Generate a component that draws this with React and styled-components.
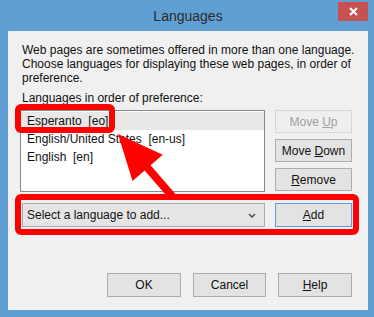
import React from "react";
import styled, { createGlobalStyle } from "styled-components";

const GlobalStyle = createGlobalStyle`
  html, body {
    margin: 0;
    padding: 0;
    background: #ffffff;
  }
  body {
    font-family: "Liberation Sans", Arial, sans-serif;
  }
`

const Window = styled.div`
  position: relative;
  box-sizing: border-box;
  width: 374px;
  height: 317px;
  background: #609fd4;
  display: flex;
  flex-direction: column;
  padding: 0 6px 7px 8px;
`

const TitleBar = styled.div`
  height: 31px;
  display: grid;
  grid-template-columns: 1fr auto 1fr;
  align-items: start;
`

const Title = styled.div`
  grid-column: 2;
  margin-top: 8px;
  font-size: 14px;
  line-height: 16px;
  color: #2b2b2b;
`

const CloseButton = styled.div`
  grid-column: 3;
  justify-self: end;
  margin-top: 2px;
  width: 30px;
  height: 19px;
  background: #c75050;
  display: flex;
  align-items: center;
  justify-content: center;
`

const Client = styled.div`
  flex: 1;
  box-sizing: border-box;
  background: #f0f0f0;
  padding: 12px 16px 0 12px;
  display: flex;
  flex-direction: column;
  font-size: 12px;
  color: #111;
`

const Intro = styled.p`
  margin: 0 0 0 2px;
  line-height: 14px;
  white-space: nowrap;
`

const Label = styled.div`
  margin: 6px 0 0 2px;
  line-height: 14px;
`

const ListRow = styled.div`
  margin-top: 5px;
  display: flex;
  gap: 10px;
  align-items: flex-start;
`

const ListBox = styled.div`
  box-sizing: border-box;
  width: 245px;
  height: 82px;
  background: #fff;
  border: 1px solid #828790;
  padding-top: 1px;
`

const ListItem = styled.div`
  height: 18px;
  line-height: 18px;
  padding-left: 6px;
  white-space: pre;
  background: ${p => (p.$selected ? "#e8e8e8" : "transparent")};
`

const ButtonColumn = styled.div`
  display: flex;
  flex-direction: column;
  gap: 6px;
`

const Button = styled.div`
  box-sizing: border-box;
  width: ${p => p.$w || 77}px;
  height: ${p => p.$h || 24}px;
  display: flex;
  align-items: center;
  justify-content: center;
  font-size: 12px;
  white-space: pre;
  color: ${p => (p.$disabled ? "#a0a0a0" : "#111")};
  background: ${p => (p.$disabled ? "#efefef" : "#e3e3e3")};
  border: 1px solid ${p => (p.$disabled ? "#d5d5d5" : p.$default ? "#569de5" : "#adadad")};
`

const Caption = styled.span`
  white-space: pre;
`

const AddRow = styled.div`
  margin-top: 11px;
  padding-left: 2px;
  display: flex;
  gap: 10px;
`

const Select = styled.div`
  box-sizing: border-box;
  width: 243px;
  height: 24px;
  display: flex;
  align-items: center;
  justify-content: space-between;
  padding: 0 8px 0 4px;
  background: #e5e5e5;
  border: 1px solid #acacac;
`

const Footer = styled.div`
  margin-top: 46px;
  display: flex;
  justify-content: flex-end;
  gap: 12px;
`

const Annotations = styled.svg`
  position: absolute;
  left: 0;
  top: 0;
  pointer-events: none;
`

const App = () => {
  return (
    <>
      <GlobalStyle />
      <Window>
        <TitleBar>
          <Title>Languages</Title>
          <CloseButton>
            <svg width="9" height="9" viewBox="0 0 9 9">
              <path d="M1 1 L8 8 M8 1 L1 8" stroke="#fff" strokeWidth="2" />
            </svg>
          </CloseButton>
        </TitleBar>
        <Client>
          <Intro>
            Web pages are sometimes offered in more than one language.<br />
            Choose languages for displaying these web pages, in order of<br />
            preference.
          </Intro>
          <Label>Languages in order of preference:</Label>
          <ListRow>
            <ListBox>
              <ListItem $selected>{"Esperanto  [eo]"}</ListItem>
              <ListItem>{"English/United States  [en-us]"}</ListItem>
              <ListItem>{"English  [en]"}</ListItem>
            </ListBox>
            <ButtonColumn>
              <Button $h={23} $disabled><Caption>Move <u>U</u>p</Caption></Button>
              <Button $h={23}><Caption>Move <u>D</u>own</Caption></Button>
              <Button $h={23}><Caption><u>R</u>emove</Caption></Button>
            </ButtonColumn>
          </ListRow>
          <AddRow>
            <Select>
              <span>Select a language to add...</span>
              <svg width="8" height="5" viewBox="0 0 8 5">
                <polyline points="1,1 4,4 7,1" fill="none" stroke="#555" strokeWidth="1.6" />
              </svg>
            </Select>
            <Button $default><Caption><u>A</u>dd</Caption></Button>
          </AddRow>
          <Footer>
            <Button $w={74}>OK</Button>
            <Button $w={73}>Cancel</Button>
            <Button $w={74}><Caption><u>H</u>elp</Caption></Button>
          </Footer>
        </Client>
        <Annotations width="374" height="317" viewBox="0 0 374 317">
          <rect x="18" y="107" width="94" height="23" rx="3" fill="none" stroke="#ff0000" strokeWidth="6" />
          <rect x="18" y="197" width="338" height="35" rx="3" fill="none" stroke="#ff0000" strokeWidth="6" />
          <polygon
            points="118,134 162.7,154.8 150.6,165.3 175,193.4 169,198.6 144.6,170.5 132.5,181"
            fill="#ff0000"
          />
        </Annotations>
      </Window>
    </>
  )
}

export default App
